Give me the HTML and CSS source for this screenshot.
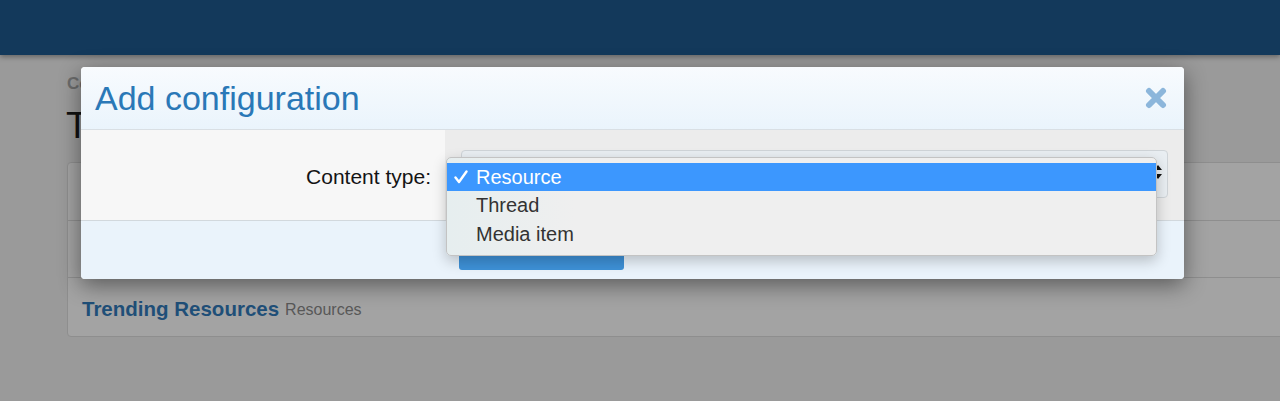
FILE: index.html
```html
<!DOCTYPE html>
<html lang="en">
<head>
    <meta charset="UTF-8">
    <title>Add configuration</title>
    <link rel="stylesheet" href="styles.css">
</head>
<body>

    <header class="topbar"></header>

    <main class="page">
        <div class="crumbs">Content</div>
        <h1 class="page-title">Trending content</h1>

        <div class="panel">
            <div class="panel-row"></div>
            <div class="panel-row"></div>
            <div class="panel-row">
                <a class="item-title">Trending Resources</a>
                <span class="item-type">Resources</span>
            </div>
        </div>
    </main>

    <!-- Modal -->
    <div class="modal">
        <div class="modal-head">
            <h2 class="modal-title">Add configuration</h2>
            <svg class="modal-close" width="22" height="22" viewBox="0 0 22 22">
                <path d="M4 4 L18 18 M18 4 L4 18" stroke="#8cb6db" stroke-width="6" stroke-linecap="round"/>
            </svg>
        </div>

        <div class="modal-body">
            <div class="form-label">Content type:</div>
            <div class="form-field">
                <div class="select-box">
                    <span class="select-arrows">
                        <svg width="8" height="16" viewBox="0 0 8 16">
                            <path d="M4 1 L8 6 L0 6 Z M4 15 L8 10 L0 10 Z" fill="#111"/>
                        </svg>
                    </span>
                </div>
            </div>

            <!-- open dropdown list -->
            <ul class="select-menu">
                <li class="option selected">
                    <span class="tick">
                        <svg width="14" height="14" viewBox="0 0 14 14">
                            <path d="M1.5 7.5 L5 12 L12.5 1.5" fill="none" stroke="#fff" stroke-width="2.4" stroke-linecap="round" stroke-linejoin="round"/>
                        </svg>
                    </span>Resource
                </li>
                <li class="option"><span class="tick"></span>Thread</li>
                <li class="option"><span class="tick"></span>Media item</li>
            </ul>
        </div>

        <div class="modal-foot">
            <button type="button" class="btn">Save</button>
        </div>
    </div>

</body>
</html>
```

FILE: styles.css
```css
body {
    margin: 0;
    padding: 0;
    background: #9a9a9a;
    font-family: "Liberation Sans", Arial, sans-serif;
    height: 401px;
    overflow: hidden;
}
.topbar {
    height: 55px;
    background: #13395b;
    box-shadow: 0 2px 5px rgba(0, 0, 0, 0.35);
    position: relative;
}
.page {
    padding: 0 0 0 66px;
}
.crumbs {
    margin-top: 19px;
    padding-left: 1px;
    font-size: 17px;
    font-weight: bold;
    color: #6b6b6b;
    line-height: 20px;
}
.page-title {
    margin: 10px 0 0;
    font-size: 37px;
    font-weight: normal;
    color: #111;
    line-height: 44px;
}
.panel {
    margin: 14px -20px 0 1px;
    background: #a3a3a3;
    border: 1px solid #8e8e8e;
    border-radius: 4px;
}
.panel-row {
    height: 56px;
    border-top: 1px solid #8e8e8e;
    display: flex;
    align-items: center;
    padding-left: 14px;
    gap: 6px;
}
.panel-row:first-child {
    height: 57px;
    border-top: none;
}
.panel-row:last-child {
    height: 58px;
    padding-top: 3px;
    box-sizing: border-box;
    height: 59px;
}
.item-title {
    font-size: 20.5px;
    font-weight: bold;
    color: #1f4f78;
}
.item-type {
    font-size: 16px;
    color: #585858;
    margin-top: 3px;
}

/* Modal */
.modal {
    position: absolute;
    left: 81px;
    top: 67px;
    width: 1103px;
    background: #f7f7f7;
    border-radius: 4px;
    box-shadow: 0 6px 22px rgba(0, 0, 0, 0.45);
}
.modal-head {
    height: 62px;
    display: flex;
    align-items: center;
    justify-content: space-between;
    padding: 0 17px 0 14px;
    background: linear-gradient(#f8fbfe, #eaf4fc);
    border-bottom: 1px solid #d9dfe4;
    border-radius: 4px 4px 0 0;
}
.modal-title {
    margin: 0;
    font-size: 34px;
    font-weight: normal;
    color: #2a78b7;
}
.modal-body {
    position: relative;
    display: grid;
    grid-template-columns: 364px 1fr;
    height: 90px;
    border-bottom: 1px solid #d2d8dd;
}
.form-label {
    background: #f7f7f7;
    display: flex;
    align-items: center;
    justify-content: flex-end;
    padding-right: 14px;
    font-size: 21px;
    color: #141414;
    padding-top: 4px;
}
.form-field {
    background: #ececec;
    display: flex;
    align-items: center;
    padding: 0 16px;
}
.select-box {
    flex: 1;
    height: 46px;
    margin-top: -2px;
    background: #e9eef2;
    border: 1px solid #cfd4d8;
    border-radius: 4px;
    display: flex;
    align-items: center;
    justify-content: flex-end;
    padding-right: 5px;
}
.select-menu {
    position: absolute;
    left: 365px;
    top: 27px;
    width: 711px;
    margin: 0;
    padding: 5px 0 0;
    height: 99px;
    box-sizing: border-box;
    list-style: none;
    background: linear-gradient(90deg, #e6eeef, #efefef 18%);
    border: 1px solid #c3c3c3;
    border-radius: 5px;
    box-shadow: 0 5px 14px rgba(0, 0, 0, 0.22);
}
.option {
    height: 29px;
    display: flex;
    align-items: center;
    font-size: 20px;
    color: #333;
}
.option.selected {
    height: 28px;
    background: #3c97fe;
    color: #fff;
}
.tick {
    width: 29px;
    padding-left: 7px;
    box-sizing: border-box;
    display: flex;
    align-items: center;
}
.modal-foot {
    height: 58px;
    background: #eaf3fb;
    border-radius: 0 0 4px 4px;
    padding: 14px 0 0 378px;
    box-sizing: border-box;
}
.btn {
    width: 165px;
    height: 35px;
    padding-bottom: 14px;
    background: #3e91d7;
    color: #fff;
    border: none;
    border-radius: 3px;
    font-size: 16px;
    font-family: "Liberation Sans", Arial, sans-serif;
}
```
